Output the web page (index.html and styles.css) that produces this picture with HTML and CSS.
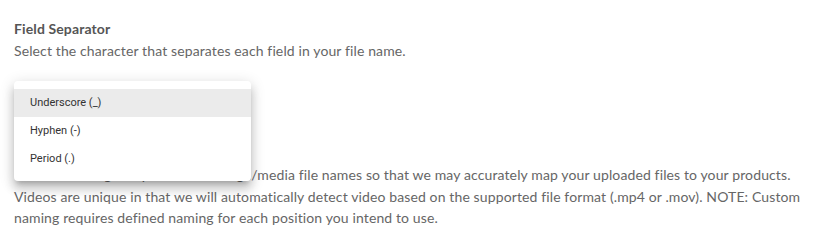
FILE: index.html
```html
<!DOCTYPE html>
<html>
<head>
<meta charset="utf-8">
<link rel="stylesheet" href="styles.css">
</head>
<body>
<div class="page">
  <h3 class="title">Field Separator</h3>
  <p class="desc">Select the character that separates each field in your file name.</p>
  <div class="select-slot"></div>
  <p class="body">Custom naming lets you set the image/media file names so that we may accurately map your uploaded files to your products. Videos are unique in that we will automatically detect video based on the supported file format (.mp4 or .mov). NOTE: Custom naming requires defined naming for each position you intend to use.</p>

  <ul class="menu">
    <li class="item selected">Underscore (_)</li>
    <li class="item">Hyphen (-)</li>
    <li class="item">Period (.)</li>
  </ul>
</div>
</body>
</html>
```

FILE: styles.css
```css
html, body {
  margin: 0;
  padding: 0;
  background: #ffffff;
}
.page {
  position: relative;
  padding: 19px 14px 0 14px;
  font-family: Lato, "Open Sans", sans-serif;
  letter-spacing: 0.12px;
}
.title {
  margin: 0;
  font-size: 14px;
  line-height: 20px;
  font-weight: 700;
  color: #555555;
}
.desc {
  margin: 2px 0 0 0;
  font-size: 14px;
  line-height: 20px;
  color: #666666;
}
.select-slot {
  height: 103px;
}
.body {
  margin: 0;
  font-size: 14px;
  line-height: 21.5px;
  color: #666666;
  max-width: 792px;
}
.menu {
  position: absolute;
  left: 14px;
  top: 81px;
  width: 237px;
  margin: 0;
  padding: 8px 0;
  list-style: none;
  letter-spacing: 0;
  background: #ffffff;
  border-radius: 4px;
  box-shadow: 0 5px 5px -3px rgba(0,0,0,0.2), 0 8px 10px 1px rgba(0,0,0,0.14), 0 3px 14px 2px rgba(0,0,0,0.12);
  font-family: Roboto, "Liberation Sans", sans-serif;
}
.item {
  height: 28px;
  line-height: 28px;
  padding: 0 16px;
  font-size: 11px;
  color: #333333;
}
.item.selected {
  background: #ebebeb;
}
```
